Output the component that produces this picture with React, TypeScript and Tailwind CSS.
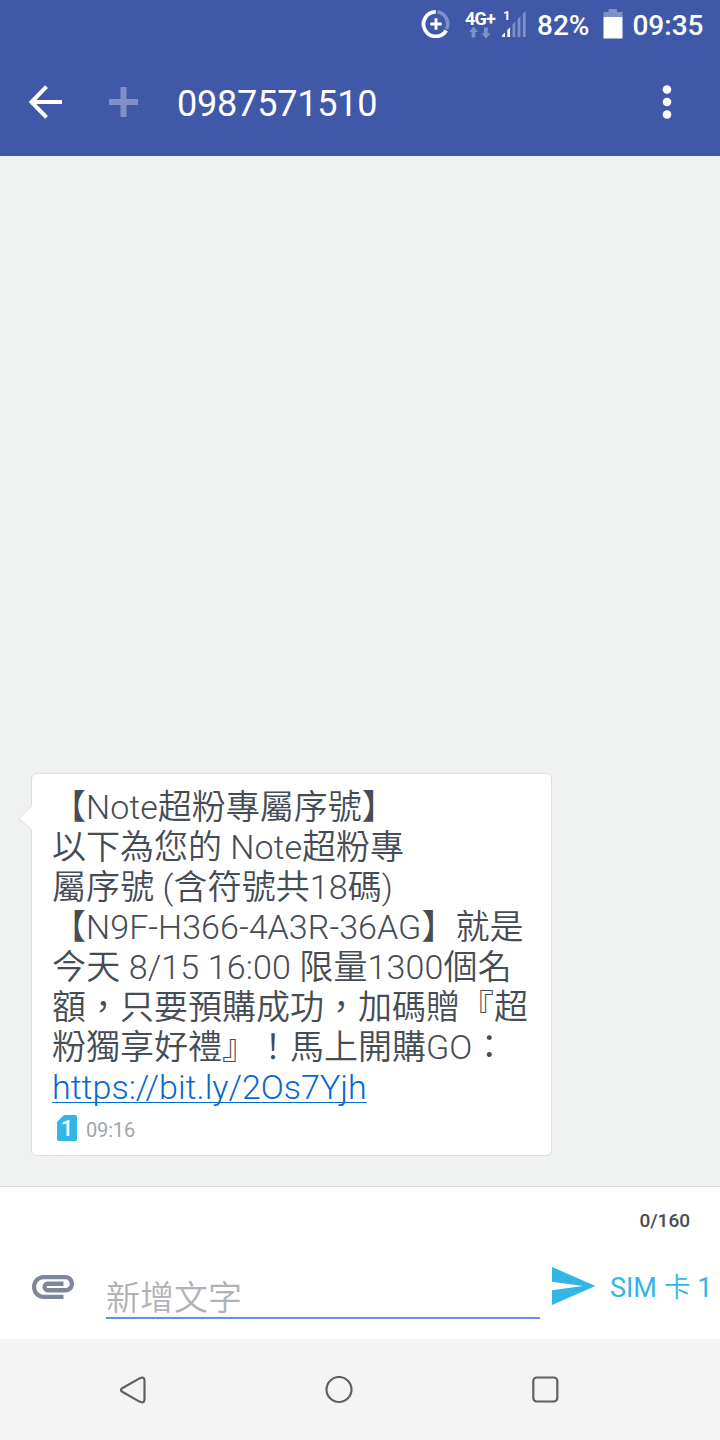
/* ========= Data ========= */
const phoneNumber = "0987571510";

const messageLines = [
  { text: "【Note超粉專屬序號】" },
  { text: "以下為您的 Note超粉專" },
  { text: "屬序號 (含符號共18碼)", className: "tracking-[0.08px]" },
  { text: "【N9F-H366-4A3R-36AG】就是", className: "tracking-[0.04px]" },
  { text: "今天 8/15 16:00 限量1300個名", className: "tracking-[0.13px]" },
  { text: "額，只要預購成功，加碼贈『超" },
  { text: "粉獨享好禮』！馬上開購GO：" },
];

/* ========= Status bar ========= */
function StatusBar() {
  return (
    <div className="flex h-[50px] items-start text-[28px] leading-[50px] font-medium">
      <svg className="mt-[10px] ml-[421px] h-7 w-[29px] shrink-0" viewBox="0 0 29 28" fill="none">
        <path d="M16.5 1.9A12.2 12.2 0 0 1 25.6 19" stroke="#7f90c6" strokeWidth="3.6" />
        <path d="M14.8 1.9A12.2 12.2 0 1 0 25.2 20.4" stroke="#fff" strokeWidth="3.8" />
        <path d="M9.3 14h11.4M15 8.3v11.4" stroke="#fff" strokeWidth="2.8" />
      </svg>
      <div className="mt-[10px] ml-[15px] flex w-[31px] flex-col">
        <span className="h-[16px] text-[18px] leading-[17px] font-bold tracking-[-0.8px] whitespace-nowrap">4G+</span>
        <svg className="ml-[4px] h-[13px] w-[22px]" viewBox="0 0 22 13" fill="#7f90c6">
          <path d="M4.6 .5L9 5.900H6.400V11.500H2.600V5.900H.2zM15 1.500h3.800v5.800h2.700L17 12.500l-4.500-5.200H15z" />
        </svg>
      </div>
      <div className="relative ml-[6px] h-[50px] w-[24px]">
        <span className="absolute top-[9px] left-[1px] text-[13px] leading-[13px] font-bold">1</span>
        <svg className="mt-[11px] h-[26px] w-6" viewBox="0 0 24 26">
          <path d="M0 26v-1.500l3-3V26z" fill="#fff" />
          <path d="M5.300 26v-6.800l2.800-3V26z" fill="#fff" />
          <path d="M10.500 26V13.600l2.800-3V26zM15.600 26V8.200l2.800-3V26zM20.800 26V3l2.900-3V26z" fill="#7f90c6" />
        </svg>
      </div>
      <span className="ml-[11px] pt-px">82%</span>
      <svg className="mt-[9px] ml-[14px] h-[30px] w-5 shrink-0" viewBox="0 0 20 30">
        <path d="M5.500 0h8.500v3H19.500v5H.5V3h5z" fill="#7f90c6" />
        <path d="M.5 8h19v21.500H.5z" fill="#fff" />
      </svg>
      <span className="ml-[9px] pt-px">09:35</span>
    </div>
  );
}

/* ========= App bar ========= */
function AppBar() {
  return (
    <div className="flex h-[106px] items-center pb-[2px] pl-7">
      <svg className="h-[34px] w-[35px]" viewBox="0 0 35 34" fill="none" stroke="#fff" strokeWidth="4">
        <path d="M18.500 1.700L3.500 17l15 15.300M3 17h31" />
      </svg>
      <svg className="ml-[46px] h-[30px] w-[29px]" viewBox="0 0 29 30" fill="#7f90c6">
        <path d="M11.500 0h6v12H29v6H17.500v12h-6V18H0v-6h11.500z" />
      </svg>
      <h1 className="ml-[39px] pt-[4px] text-[36px] leading-[42px] font-normal tracking-[-0.2px]">
        {phoneNumber}
      </h1>
      <svg className="mr-[48px] ml-auto h-[34px] w-[10px]" viewBox="0 0 10 34" fill="#fff">
        <circle cx="5" cy="4.500" r="4.300" />
        <circle cx="5" cy="17" r="4.300" />
        <circle cx="5" cy="29.500" r="4.300" />
      </svg>
    </div>
  );
}

/* ========= Received message ========= */
function MessageBubble() {
  return (
    <div className="relative ml-[31px] h-[383px] w-[521px] rounded-md border border-[#dcdfdf] bg-white pt-[13px] pl-5">
      <svg className="absolute top-[30px] -left-[14px] h-[28px] w-[15px]" viewBox="0 0 15 28">
        <path d="M15 1L1 14.500L15 27z" fill="#fff" />
        <path d="M14 1.500L1 14.500L14 26.500" fill="none" stroke="#dcdfdf" />
      </svg>
      <div className="text-[34px] leading-[40px] [font-weight:350] whitespace-nowrap text-[#464c54] [text-spacing-trim:space-all]">
        {messageLines.map((line) => (
          <p key={line.text} className={`h-10 ${line.className ?? ""}`}>
            {line.text}
          </p>
        ))}
        <p className="h-10">
          <a
            href="https://bit.ly/2Os7Yjh"
            className="text-[#0668cc] underline decoration-1 underline-offset-[3px] [text-decoration-skip-ink:none]"
          >
            https://bit.ly/2Os7Yjh
          </a>
        </p>
      </div>
      <div className="mt-[8px] ml-[5px] flex h-[26px] items-center">
        <span className="flex h-[26px] w-5 items-center justify-center rounded-[2px] bg-[#33b5e5] pt-px text-[22px] leading-[26px] font-medium text-white [clip-path:polygon(7px_0,100%_0,100%_100%,0_100%,0_7px)]">
          1
        </span>
        <span className="ml-[9px] pt-[4px] text-[20px] leading-6 tracking-[-0.15px] text-[#a3a5a9]">09:16</span>
      </div>
    </div>
  );
}

/* ========= Compose area ========= */
function Composer() {
  return (
    <div className="h-[153px] border-t border-[#d9dcdc] bg-white">
      <div className="pt-[22px] pr-[30px] text-right text-[19px] leading-6 font-medium text-[#464c54]">
        0/160
      </div>
      <div className="flex h-[100px] items-start">
        <svg className="mt-[42px] ml-8 h-[24px] w-[42px]" viewBox="2 7 20 11" preserveAspectRatio="none" fill="#7e8797">
          <path d="M2 12.500C2 9.460 4.460 7 7.500 7H18c2.210 0 4 1.790 4 4s-1.790 4-4 4H9.500C8.120 15 7 13.880 7 12.500S8.120 10 9.500 10H17v2H9.410c-.55 0-.55 1 0 1H18c1.100 0 2-.9 2-2s-.9-2-2-2H7.500C5.570 9 4 10.570 4 12.500S5.570 16 7.500 16H17v2H7.500C4.460 18 2 15.540 2 12.500z" />
        </svg>
        <div className="mt-[44px] ml-8 h-[42px] w-[434px] border-b-2 border-[#6a8cf8] pt-px text-[34px] leading-[40px] [font-weight:350] text-[#b1b2b6]">
          新增文字
        </div>
        <svg className="mt-[34px] ml-3 h-[38px] w-11" viewBox="0 0 44 38" fill="#33b5e5">
          <path d="M0 0l43.500 19L0 38V23.200L31 19L0 14.800z" />
        </svg>
        <span className="mt-[39px] ml-[14px] text-[27px] leading-8 whitespace-nowrap text-[#33b5e5]">
          SIM <span className="[font-weight:350]">卡</span> 1
        </span>
      </div>
    </div>
  );
}

/* ========= Navigation bar ========= */
function NavBar() {
  return (
    <div className="flex h-[101px] items-center bg-[#f4f4f4] pl-[119px]">
      <svg className="h-7 w-7" viewBox="0 0 28 28" fill="none" stroke="#606060" strokeWidth="2.200">
        <path d="M3.200 12.200L20.500 2.400Q25.500.2 25.500 4.500V23.500Q25.500 27.800 20.500 25.600L3.200 15.800Q.8 14 3.200 12.200z" />
      </svg>
      <svg className="ml-[178px] h-7 w-7" viewBox="0 0 28 28" fill="none" stroke="#606060" strokeWidth="2.200">
        <circle cx="14" cy="13.500" r="12.500" />
      </svg>
      <svg className="ml-[178px] h-7 w-7" viewBox="0 0 28 28" fill="none" stroke="#606060" strokeWidth="2.200">
        <rect x="2.300" y="1.500" width="24" height="24" rx="3.500" />
      </svg>
    </div>
  );
}

export default function App() {
  return (
    <div
      lang="zh-Hant"
      className="flex h-[1440px] w-[720px] flex-col overflow-hidden bg-[#f0f2f1] font-[Roboto,'Noto_Sans_CJK_TC',sans-serif]"
    >
      <header className="h-[156px] bg-[#3f59a8] text-white">
        <StatusBar />
        <AppBar />
      </header>
      <main className="flex flex-1 flex-col justify-end pb-[30px]">
        <MessageBubble />
      </main>
      <Composer />
      <NavBar />
    </div>
  );
}
